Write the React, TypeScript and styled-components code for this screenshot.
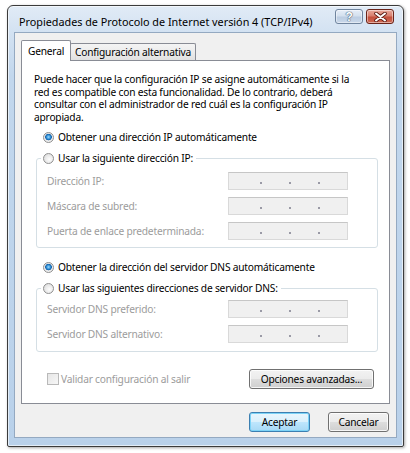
import React from "react";
import styled, { createGlobalStyle } from "styled-components";

const FONT = `"Noto Sans", "Open Sans", "Liberation Sans", sans-serif`;

const GlobalStyle = createGlobalStyle`
  html, body {
    margin: 0;
    padding: 0;
    background: #ffffff;
  }
  body {
    font-family: ${FONT};
    font-size: 10.2px;
    letter-spacing: -0.2px;
    color: #000000;
  }
`;

const Page = styled.div`
  width: 410px;
  height: 453px;
  box-sizing: border-box;
  padding: 5px 0 0 7px;
`;

const Window = styled.div`
  width: 397px;
  height: 442px;
  box-sizing: border-box;
  border: 1px solid #3b3b3b;
  border-radius: 6px 6px 2px 2px;
  background: linear-gradient(to bottom, #e1ebf6 0px, #d3e2f2 26px, #c2d7ed 70px, #b9d1ea 100%);
  box-shadow: inset 0 0 0 1px rgba(255, 255, 255, 0.6), 1px 1px 3px rgba(0, 0, 0, 0.35);
  display: flex;
  flex-direction: column;
  padding: 0 6px 8px 6px;
`;

const TitleBar = styled.div`
  height: 26px;
  display: flex;
  align-items: flex-start;
  flex-shrink: 0;
`;

const Title = styled.div`
  margin: 9px 0 0 5px;
  line-height: 14px;
  font-size: 10.8px;
  letter-spacing: 0;
  white-space: nowrap;
`;

const CaptionButtons = styled.div`
  margin-left: auto;
  margin-top: 3px;
  display: flex;
  gap: 3px;
  padding-right: 3px;
`;

const CaptionButton = styled.div<{ $close?: boolean }>`
  width: 28px;
  height: 15px;
  box-sizing: border-box;
  border: 1px solid ${(p) => (p.$close ? "#6b2419" : "#6f849e")};
  border-radius: 3px;
  background: ${(p) =>
    p.$close
      ? "linear-gradient(to bottom, #e9a99b 0%, #d8806f 45%, #c4503d 55%, #cf6a54 100%)"
      : "linear-gradient(to bottom, #e6eef8 0%, #d4e0ee 45%, #bccde2 55%, #c9d8ea 100%)"};
  box-shadow: inset 0 0 0 1px rgba(255, 255, 255, 0.45);
  display: flex;
  align-items: center;
  justify-content: center;
`;

const HelpGlyph = styled.span`
  font-family: "Liberation Sans", sans-serif;
  font-weight: bold;
  font-size: 12px;
  line-height: 12px;
  color: #ffffff;
  text-shadow: 0 0 1px #4b5d73, 0 0 1px #4b5d73, 0 0 1px #4b5d73;
`;

const Client = styled.div`
  flex: 1;
  border: 1px solid #94a9c1;
  background: #f0f0f0;
  padding: 7px 6px 0 6px;
  display: flex;
  flex-direction: column;
`;

const TabStrip = styled.div`
  display: flex;
  align-items: flex-end;
  height: 21px;
  margin-bottom: -1px;
  position: relative;
  z-index: 1;
`;

const Tab = styled.div<{ $active?: boolean }>`
  box-sizing: border-box;
  border: 1px solid #898c95;
  border-bottom: none;
  border-radius: 2px 2px 0 0;
  white-space: nowrap;
  display: flex;
  align-items: center;
  justify-content: center;
  ${(p) =>
    p.$active
      ? `
    width: 50px;
    height: 21px;
    background: #ffffff;
    position: relative;
    z-index: 2;
    padding-bottom: 1px;
  `
      : `
    width: 126px;
    height: 17px;
    margin-left: -1px;
    margin-bottom: 1px;
    background: linear-gradient(to bottom, #f4f4f4 0%, #ececec 50%, #e0e0e0 100%);
  `}
`;

const Panel = styled.div`
  height: 344px;
  box-sizing: border-box;
  border: 1px solid #898c95;
  background: #ffffff;
  display: flex;
  flex-direction: column;
`;

const Intro = styled.div`
  margin: 12px 0 0 12px;
  line-height: 12.5px;
  white-space: nowrap;
`;

const RadioRow = styled.label<{ $top: number }>`
  display: flex;
  align-items: center;
  gap: 4px;
  height: 14px;
  margin: ${(p) => p.$top}px 0 0 21px;
  white-space: nowrap;
`;

const RadioDot = styled.span<{ $checked?: boolean }>`
  width: 11px;
  height: 11px;
  box-sizing: border-box;
  border-radius: 50%;
  border: 1px solid #8f8f8f;
  flex-shrink: 0;
  background: ${(p) =>
    p.$checked
      ? "radial-gradient(circle at 50% 45%, #9fdcff 0px, #2f8fd6 2px, #115ea6 3px, #e9e9e9 3.6px, #fafafa 100%)"
      : "radial-gradient(circle at 60% 60%, #fdfdfd 0px, #eeeeee 3px, #d6d6d6 100%)"};
`;

const Group = styled.fieldset<{ $padTop: number; $padBottom: number }>`
  margin: 7px 11px 0 14px;
  padding: ${(p) => p.$padTop}px 10px ${(p) => p.$padBottom}px 10px;
  border: 1px solid #d5dfe5;
  border-radius: 3px;
  display: flex;
  flex-direction: column;
  gap: 7px;
  min-width: 0;
`;

const Legend = styled.legend`
  margin-left: -6px;
  padding: 0 3px 0 2px;
  height: 14px;
  line-height: 14px;
  display: flex;
  align-items: center;
  gap: 4px;
  white-space: nowrap;
`;

const FieldRow = styled.div`
  display: flex;
  align-items: center;
  height: 18px;
`;

const FieldLabel = styled.span`
  width: 181px;
  color: #9c9c9c;
  white-space: nowrap;
`;

const IpField = styled.div`
  width: 120px;
  height: 18px;
  box-sizing: border-box;
  border: 1px solid #d9d9d9;
  border-top-color: #c6c6c6;
  background: #f0f0f0;
  display: flex;
  align-items: center;
  padding-left: 31px;
  gap: 27px;
`;

const IpDot = styled.span`
  width: 2px;
  height: 2px;
  margin-top: 4px;
  background: #9a9aa6;
`;

const BottomRow = styled.div`
  display: flex;
  align-items: center;
  height: 20px;
  margin-top: 17px;
  padding: 0 15px 0 25px;
`;

const CheckLabel = styled.label`
  display: flex;
  align-items: center;
  gap: 2px;
  color: #9c9c9c;
  white-space: nowrap;
`;

const CheckBox = styled.span`
  width: 12px;
  height: 12px;
  box-sizing: border-box;
  border: 1px solid #b9b9b9;
  background: linear-gradient(135deg, #e6e6e6 0%, #f7f7f7 100%);
`;

const Button = styled.button<{ $default?: boolean; $width: number }>`
  width: ${(p) => p.$width}px;
  height: 20px;
  box-sizing: border-box;
  padding: 0;
  font-family: ${FONT};
  font-size: 10.2px;
  letter-spacing: -0.2px;
  color: #000000;
  border-radius: 3px;
  border: 1px solid ${(p) => (p.$default ? "#3c7fb1" : "#707070")};
  background: ${(p) =>
    p.$default
      ? "linear-gradient(to bottom, #eaf6fd 0%, #d9f0fc 50%, #bee6fd 51%, #a7d9f5 100%)"
      : "linear-gradient(to bottom, #f2f2f2 0%, #ebebeb 50%, #dddddd 51%, #cfcfcf 100%)"};
  box-shadow: inset 0 0 0 1px ${(p) => (p.$default ? "#7cd3f7" : "rgba(255,255,255,0.8)")};
`;

const AdvancedButton = styled(Button)`
  margin-left: auto;
`;

const DialogButtons = styled.div`
  display: flex;
  justify-content: flex-end;
  gap: 18px;
  margin-top: 8px;
  padding-right: 1px;
`;

const Radio: React.FC<{ checked?: boolean; label: string; top: number }> = ({ checked, label, top }) => (
  <RadioRow $top={top}>
    <RadioDot $checked={checked} />
    {label}
  </RadioRow>
);

const IpInput: React.FC<{ label: string }> = ({ label }) => (
  <FieldRow>
    <FieldLabel>{label}</FieldLabel>
    <IpField>
      <IpDot />
      <IpDot />
      <IpDot />
    </IpField>
  </FieldRow>
);

const CloseGlyph = () => (
  <svg width="13" height="10" viewBox="0 0 13 10">
    <path d="M2 1.5 L11 8.5 M11 1.5 L2 8.5" stroke="#5a1a12" strokeWidth="3.6" strokeLinecap="round" />
    <path d="M2 1.5 L11 8.5 M11 1.5 L2 8.5" stroke="#ffffff" strokeWidth="2" strokeLinecap="round" />
  </svg>
);

export default function App() {
  return (
    <>
      <GlobalStyle />
      <Page>
        <Window>
          <TitleBar>
            <Title>Propiedades de Protocolo de Internet versión 4 (TCP/IPv4)</Title>
            <CaptionButtons>
              <CaptionButton>
                <HelpGlyph>?</HelpGlyph>
              </CaptionButton>
              <CaptionButton $close>
                <CloseGlyph />
              </CaptionButton>
            </CaptionButtons>
          </TitleBar>
          <Client>
            <TabStrip>
              <Tab $active>General</Tab>
              <Tab>Configuración alternativa</Tab>
            </TabStrip>
            <Panel>
              <Intro>
                Puede hacer que la configuración IP se asigne automáticamente si la
                <br />
                red es compatible con esta funcionalidad. De lo contrario, deberá
                <br />
                consultar con el administrador de red cuál es la configuración IP
                <br />
                apropiada.
              </Intro>
              <Radio checked top={7} label="Obtener una dirección IP automáticamente" />
              <Group $padTop={7} $padBottom={7}>
                <Legend>
                  <RadioDot />
                  Usar la siguiente dirección IP:
                </Legend>
                <IpInput label="Dirección IP:" />
                <IpInput label="Máscara de subred:" />
                <IpInput label="Puerta de enlace predeterminada:" />
              </Group>
              <Radio checked top={12} label="Obtener la dirección del servidor DNS automáticamente" />
              <Group $padTop={5} $padBottom={8}>
                <Legend>
                  <RadioDot />
                  Usar las siguientes direcciones de servidor DNS:
                </Legend>
                <IpInput label="Servidor DNS preferido:" />
                <IpInput label="Servidor DNS alternativo:" />
              </Group>
              <BottomRow>
                <CheckLabel>
                  <CheckBox />
                  Validar configuración al salir
                </CheckLabel>
                <AdvancedButton $width={125}>Opciones avanzadas...</AdvancedButton>
              </BottomRow>
            </Panel>
            <DialogButtons>
              <Button $default $width={61}>Aceptar</Button>
              <Button $width={61}>Cancelar</Button>
            </DialogButtons>
          </Client>
        </Window>
      </Page>
    </>
  );
}
